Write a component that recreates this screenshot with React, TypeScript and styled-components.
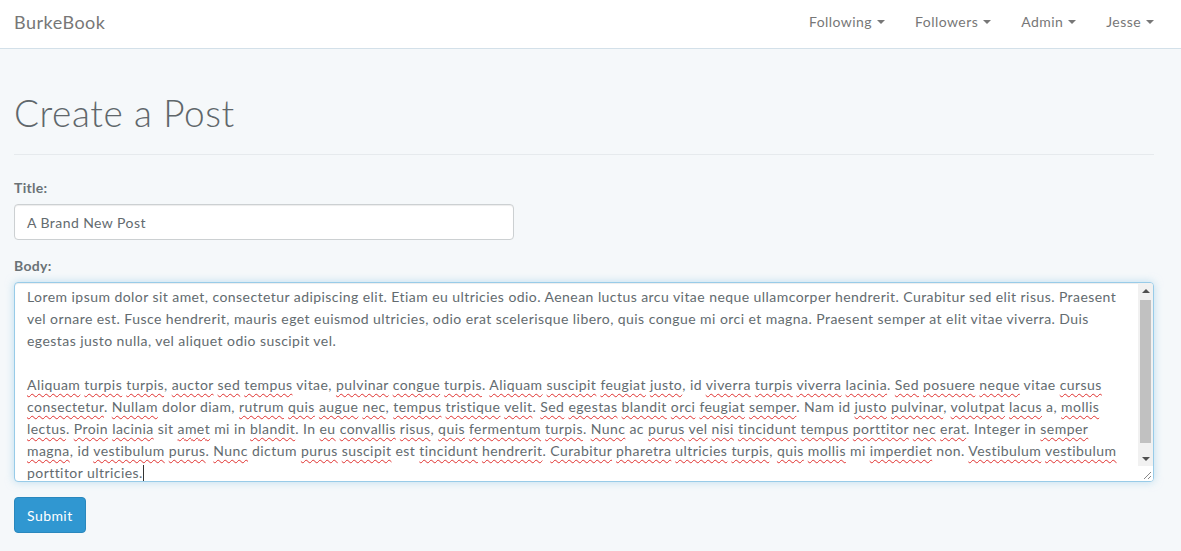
import React from "react";
import styled, { createGlobalStyle } from "styled-components";

const GlobalStyle = createGlobalStyle`
  html, body {
    margin: 0;
    padding: 0;
    background: #f5f8fa;
    color: #636b6f;
    font-family: "Lato", "Open Sans", sans-serif;
    font-size: 14px;
    letter-spacing: 0.44px;
  }
`;

const Page = styled.div`
  width: 1181px;
  height: 551px;
  overflow: hidden;
  background: #f5f8fa;
`;

const NavBar = styled.nav`
  box-sizing: border-box;
  height: 49px;
  background: #ffffff;
  border-bottom: 1px solid #d3e0e9;
  display: flex;
  align-items: center;
  justify-content: space-between;
  padding: 0 27px 5px 14px;
`;

const Brand = styled.div`
  font-size: 18px;
  color: #777777;
  letter-spacing: 0.5px;
`;

const NavList = styled.ul`
  display: flex;
  list-style: none;
  margin: 0;
  padding: 0;
`;

const NavItem = styled.li`
  color: #777777;
  font-size: 14px;
  padding: 0 15px;
  display: flex;
  align-items: center;
  &:last-child {
    padding-right: 0;
  }
`;

const Caret = styled.span`
  display: inline-block;
  width: 0;
  height: 0;
  margin-left: 5px;
  margin-top: 1px;
  border-top: 4px solid #777777;
  border-left: 4px solid transparent;
  border-right: 4px solid transparent;
`;

const Container = styled.main`
  width: 1140px;
  padding-left: 14px;
`;

const PageHeader = styled.div`
  padding-top: 42px;
  padding-bottom: 19px;
  border-bottom: 1px solid #e6eaed;
  margin-bottom: 22px;
`;

const Title = styled.h1`
  margin: 0;
  font-size: 37px;
  font-weight: 300;
  line-height: 44px;
  letter-spacing: 0.6px;
  color: #5f676b;
`;

const Group = styled.div`
  margin-bottom: 15px;
`;

const Label = styled.label`
  display: block;
  font-weight: 700;
  font-size: 14px;
  line-height: 22px;
  margin-bottom: 5px;
  letter-spacing: 0.3px;
  color: #6a7276;
`;

const TextInput = styled.div`
  box-sizing: border-box;
  width: 500px;
  height: 36px;
  padding: 0 12px;
  display: flex;
  align-items: center;
  background: #ffffff;
  border: 1px solid #ccd0d2;
  border-radius: 4px;
  box-shadow: inset 0 1px 1px rgba(0, 0, 0, 0.075);
  color: #636b6f;
`;

const TextArea = styled.div`
  box-sizing: border-box;
  width: 1140px;
  height: 200px;
  display: flex;
  background: #ffffff;
  border: 1px solid #98cbe8;
  border-radius: 4px;
  box-shadow: inset 0 1px 1px rgba(0, 0, 0, 0.075),
    0 0 8px rgba(152, 203, 232, 0.6);
  overflow: hidden;
`;

const TextBody = styled.div`
  flex: 1;
  padding: 3px 12px 0;
  overflow: hidden;
  color: #636b6f;
`;

const Line = styled.div`
  height: 22px;
  line-height: 22px;
  white-space: nowrap;
`;

const Misspelled = styled.span`
  text-decoration: underline wavy #e0312f;
  text-decoration-thickness: 1px;
  text-underline-offset: 3px;
  text-decoration-skip-ink: none;
`;

const Cursor = styled.span`
  display: inline-block;
  width: 1px;
  height: 17px;
  background: #333;
  vertical-align: -4px;
`;

const ScrollBar = styled.div`
  width: 15px;
  display: flex;
  flex-direction: column;
  background: #f1f1f1;
`;

const ScrollArrow = styled.div<{ $down?: boolean }>`
  height: 15px;
  display: flex;
  align-items: center;
  justify-content: center;
  &::after {
    content: "";
    width: 0;
    height: 0;
    border-left: 4px solid transparent;
    border-right: 4px solid transparent;
    ${(p) =>
      p.$down
        ? "border-top: 4px solid #505050;"
        : "border-bottom: 4px solid #505050;"}
  }
`;

const Track = styled.div`
  flex: 1;
  padding: 2px 2px;
  display: flex;
  flex-direction: column;
`;

const Thumb = styled.div`
  height: 143px;
  background: #c1c1c1;
`;

const ResizeCorner = styled.div`
  height: 15px;
  background: #ffffff;
  display: flex;
  align-items: flex-end;
  justify-content: flex-end;
`;

const Button = styled.button`
  height: 36px;
  padding: 0 12px;
  background: #3097d1;
  border: 1px solid #2a88bd;
  border-radius: 4px;
  color: #ffffff;
  font-family: "Lato", "Open Sans", sans-serif;
  font-size: 14px;
  font-weight: 400;
  letter-spacing: 0.44px;
`;

const bodyLines = [
  "Lorem ipsum dolor sit amet, consectetur adipiscing elit. Etiam eu ultricies odio. Aenean luctus arcu vitae neque ullamcorper hendrerit. Curabitur sed elit risus. Praesent",
  "vel ornare est. Fusce hendrerit, mauris eget euismod ultricies, odio erat scelerisque libero, quis congue mi orci et magna. Praesent semper at elit vitae viverra. Duis",
  "egestas justo nulla, vel aliquet odio suscipit vel.",
  "",
  "~Aliquam ~turpis ~turpis, ~auctor ~sed ~tempus vitae, ~pulvinar ~congue ~turpis. ~Aliquam ~suscipit ~feugiat ~justo, id ~viverra ~turpis ~viverra ~lacinia. ~Sed ~posuere ~neque vitae ~cursus",
  "~consectetur. ~Nullam dolor diam, ~rutrum ~quis ~augue ~nec, ~tempus ~tristique ~velit. ~Sed ~egestas ~blandit ~orci ~feugiat ~semper. Nam id ~justo ~pulvinar, ~volutpat ~lacus a, ~mollis",
  "~lectus. ~Proin ~lacinia sit ~amet mi in ~blandit. In ~eu ~convallis ~risus, ~quis ~fermentum ~turpis. ~Nunc ac ~purus ~vel ~nisi ~tincidunt ~tempus ~porttitor ~nec ~erat. Integer in ~semper",
  "~magna, id ~vestibulum ~purus. ~Nunc dictum ~purus ~suscipit est ~tincidunt ~hendrerit. ~Curabitur ~pharetra ~ultricies ~turpis, ~quis ~mollis mi ~imperdiet non. ~Vestibulum ~vestibulum",
  "~porttitor ~ultricies.",
];

function renderLine(text: string) {
  const words = text.split(" ");
  return words.map((w, i) => {
    const sep = i < words.length - 1 ? " " : "";
    if (w.startsWith("~")) {
      const m = w.slice(1).match(/^([A-Za-z]+)(.*)$/);
      const word = m ? m[1] : w.slice(1);
      const rest = m ? m[2] : "";
      return (
        <React.Fragment key={i}>
          <Misspelled>{word}</Misspelled>
          {rest}
          {sep}
        </React.Fragment>
      );
    }
    return <React.Fragment key={i}>{w + sep}</React.Fragment>;
  });
}

const navItems = ["Following", "Followers", "Admin", "Jesse"];

export default function App() {
  return (
    <Page>
      <GlobalStyle />
      <NavBar>
        <Brand>BurkeBook</Brand>
        <NavList>
          {navItems.map((n) => (
            <NavItem key={n}>
              {n}
              <Caret />
            </NavItem>
          ))}
        </NavList>
      </NavBar>
      <Container>
        <PageHeader>
          <Title>Create a Post</Title>
        </PageHeader>
        <Group>
          <Label>Title:</Label>
          <TextInput>A Brand New Post</TextInput>
        </Group>
        <Group>
          <Label>Body:</Label>
          <TextArea>
            <TextBody>
              {bodyLines.map((l, i) => (
                <Line key={i}>
                  {l ? renderLine(l) : "\u00a0"}
                  {i === bodyLines.length - 1 && <Cursor />}
                </Line>
              ))}
            </TextBody>
            <ScrollBar>
              <ScrollArrow />
              <Track>
                <Thumb />
              </Track>
              <ScrollArrow $down />
              <ResizeCorner>
                <svg width="15" height="15" viewBox="0 0 15 15">
                  <path d="M13 6 L6 13 M13 10 L10 13" stroke="#888" strokeWidth="1" />
                </svg>
              </ResizeCorner>
            </ScrollBar>
          </TextArea>
        </Group>
        <Button>Submit</Button>
      </Container>
    </Page>
  );
}
